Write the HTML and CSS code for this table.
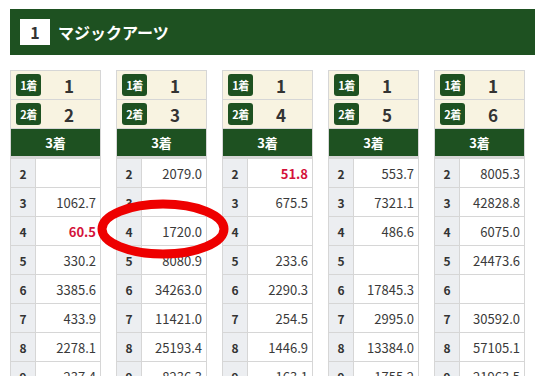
FILE: index.html
```html
<!DOCTYPE html>
<html lang="ja">
<head>
<meta charset="utf-8">
<title>マジックアーツ</title>
<link rel="stylesheet" href="styles.css">
</head>
<body>
<div class="page">
  <div class="title-bar">
    <span class="num-box">1</span>
    <span class="title">マジックアーツ</span>
  </div>
  <div class="cols">
    <div class="col">
      <div class="pick"><span class="badge">1着</span><span class="pick-num">1</span></div>
      <div class="pick"><span class="badge">2着</span><span class="pick-num">2</span></div>
      <div class="third">3着</div>
      <div class="row"><span class="lab">2</span><span class="val"></span></div>
      <div class="row"><span class="lab">3</span><span class="val">1062.7</span></div>
      <div class="row"><span class="lab">4</span><span class="val hot">60.5</span></div>
      <div class="row"><span class="lab">5</span><span class="val">330.2</span></div>
      <div class="row"><span class="lab">6</span><span class="val">3385.6</span></div>
      <div class="row"><span class="lab">7</span><span class="val">433.9</span></div>
      <div class="row"><span class="lab">8</span><span class="val">2278.1</span></div>
      <div class="row"><span class="lab">9</span><span class="val">237.4</span></div>
    </div>
    <div class="col">
      <div class="pick"><span class="badge">1着</span><span class="pick-num">1</span></div>
      <div class="pick"><span class="badge">2着</span><span class="pick-num">3</span></div>
      <div class="third">3着</div>
      <div class="row"><span class="lab">2</span><span class="val">2079.0</span></div>
      <div class="row"><span class="lab">3</span><span class="val"></span></div>
      <div class="row"><span class="lab">4</span><span class="val">1720.0</span></div>
      <div class="row"><span class="lab">5</span><span class="val">8080.9</span></div>
      <div class="row"><span class="lab">6</span><span class="val">34263.0</span></div>
      <div class="row"><span class="lab">7</span><span class="val">11421.0</span></div>
      <div class="row"><span class="lab">8</span><span class="val">25193.4</span></div>
      <div class="row"><span class="lab">9</span><span class="val">8236.3</span></div>
    </div>
    <div class="col">
      <div class="pick"><span class="badge">1着</span><span class="pick-num">1</span></div>
      <div class="pick"><span class="badge">2着</span><span class="pick-num">4</span></div>
      <div class="third">3着</div>
      <div class="row"><span class="lab">2</span><span class="val hot">51.8</span></div>
      <div class="row"><span class="lab">3</span><span class="val">675.5</span></div>
      <div class="row"><span class="lab">4</span><span class="val"></span></div>
      <div class="row"><span class="lab">5</span><span class="val">233.6</span></div>
      <div class="row"><span class="lab">6</span><span class="val">2290.3</span></div>
      <div class="row"><span class="lab">7</span><span class="val">254.5</span></div>
      <div class="row"><span class="lab">8</span><span class="val">1446.9</span></div>
      <div class="row"><span class="lab">9</span><span class="val">163.1</span></div>
    </div>
    <div class="col">
      <div class="pick"><span class="badge">1着</span><span class="pick-num">1</span></div>
      <div class="pick"><span class="badge">2着</span><span class="pick-num">5</span></div>
      <div class="third">3着</div>
      <div class="row"><span class="lab">2</span><span class="val">553.7</span></div>
      <div class="row"><span class="lab">3</span><span class="val">7321.1</span></div>
      <div class="row"><span class="lab">4</span><span class="val">486.6</span></div>
      <div class="row"><span class="lab">5</span><span class="val"></span></div>
      <div class="row"><span class="lab">6</span><span class="val">17845.3</span></div>
      <div class="row"><span class="lab">7</span><span class="val">2995.0</span></div>
      <div class="row"><span class="lab">8</span><span class="val">13384.0</span></div>
      <div class="row"><span class="lab">9</span><span class="val">1755.2</span></div>
    </div>
    <div class="col">
      <div class="pick"><span class="badge">1着</span><span class="pick-num">1</span></div>
      <div class="pick"><span class="badge">2着</span><span class="pick-num">6</span></div>
      <div class="third">3着</div>
      <div class="row"><span class="lab">2</span><span class="val">8005.3</span></div>
      <div class="row"><span class="lab">3</span><span class="val">42828.8</span></div>
      <div class="row"><span class="lab">4</span><span class="val">6075.0</span></div>
      <div class="row"><span class="lab">5</span><span class="val">24473.6</span></div>
      <div class="row"><span class="lab">6</span><span class="val"></span></div>
      <div class="row"><span class="lab">7</span><span class="val">30592.0</span></div>
      <div class="row"><span class="lab">8</span><span class="val">57105.1</span></div>
      <div class="row"><span class="lab">9</span><span class="val">21963.5</span></div>
    </div>
  </div>
  <svg class="mark" width="140" height="70" viewBox="0 0 140 70" aria-hidden="true">
    <ellipse cx="68" cy="34" rx="61" ry="25" fill="none" stroke="#ee0000" stroke-width="9"/>
  </svg>
</div>
</body>
</html>
```

FILE: styles.css
```css
html, body {
  margin: 0;
  padding: 0;
  background: #ffffff;
  overflow: hidden;
}

body {
  font-family: "Noto Sans CJK JP", "Noto Sans", sans-serif;
  color: #333333;
}

.page {
  position: relative;
  padding: 9px 0 0 10px;
}

.title-bar {
  display: flex;
  align-items: center;
  height: 46px;
  background: #1e5121;
  padding-left: 10px;
  gap: 8px;
}

.num-box {
  display: flex;
  align-items: center;
  justify-content: center;
  width: 30px;
  height: 26px;
  background: #ffffff;
  color: #333333;
  font-size: 16px;
  font-weight: 700;
  line-height: 1;
}

.title {
  color: #ffffff;
  font-size: 16px;
  font-weight: 700;
  line-height: 1;
}

.cols {
  display: flex;
  gap: 15px;
  margin-top: 15px;
}

.col {
  width: 89px;
  flex: none;
  border: 1px solid #d6d6d6;
  border-bottom: none;
}

.pick {
  display: flex;
  align-items: center;
  height: 28px;
  background: #f8f3e1;
  border-bottom: 1px solid #d6d6d6;
  padding-left: 5px;
}

.badge {
  display: flex;
  align-items: center;
  justify-content: center;
  width: 25px;
  height: 22px;
  border-radius: 3px;
  background: #1e5121;
  color: #ffffff;
  font-size: 11px;
  font-weight: 700;
  line-height: 1;
  letter-spacing: -0.5px;
}

.pick-num {
  flex: 1;
  text-align: center;
  font-size: 17px;
  font-weight: 700;
  line-height: 1;
  color: #333333;
  padding-right: 3px;
}

.third {
  display: flex;
  align-items: center;
  justify-content: center;
  height: 27px;
  background: #1e5121;
  color: #ffffff;
  font-size: 13px;
  font-weight: 700;
  border-bottom: 3px solid #d6d6d6;
}

.row {
  display: flex;
  height: 28px;
  border-bottom: 1px solid #d6d6d6;
  background: #ffffff;
}

.lab {
  display: flex;
  align-items: center;
  justify-content: center;
  width: 24px;
  flex: none;
  background: #eceef1;
  border-right: 1px solid #d6d6d6;
  font-size: 12px;
  font-weight: 700;
  color: #333333;
}

.val {
  display: flex;
  align-items: center;
  justify-content: flex-end;
  flex: 1;
  padding-right: 4px;
  font-size: 13px;
  color: #3a3a3a;
}

.val.hot {
  color: #d4123b;
  font-weight: 700;
}

.mark {
  position: absolute;
  left: 95px;
  top: 195px;
}
```
